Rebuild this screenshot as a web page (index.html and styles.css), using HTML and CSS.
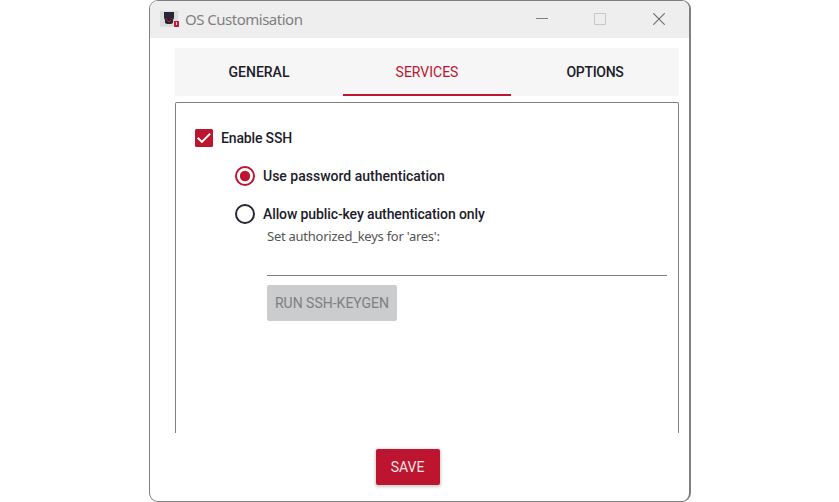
FILE: index.html
```html
<!DOCTYPE html>
<html lang="en">
<head>
<meta charset="utf-8">
<title>OS Customisation</title>
<link rel="stylesheet" href="styles.css">
</head>
<body>
<main class="window">
  <header class="titlebar">
    <svg class="app-icon" width="19" height="19" viewBox="0 0 19 19">
      <path fill="#dcdcdc" d="M0 1h18v16H0z"/>
      <path fill="#2b2434" d="M4 2h10v6l-1 2v3l-2 1H7l-2-1v-3L4 8z"/>
      <path fill="#c51a3a" d="M6 8h1v1H6zM11 8h1v1h-1zM7 10h1v1H7zM10 10h1v1h-1zM8 11h2v1H8zM14 11h5v6h-5z"/>
      <path fill="#f5e6dc" d="M16 12h1v3h-1z"/>
    </svg>
    <h1 class="title">OS Customisation</h1>
    <div class="controls">
      <svg width="12" height="12" viewBox="0 0 12 12"><path d="M0 5.5h12" stroke="#808080"/></svg>
      <svg width="12" height="12" viewBox="0 0 12 12"><path d="M.5.5h11v11H.5z" fill="none" stroke="#c8c8c8"/></svg>
      <svg class="close" width="12" height="12" viewBox="0 0 12 12"><path d="M.3.3l11.4 11.4M11.7.3L.3 11.7" stroke="#707070" stroke-width="1.2"/></svg>
    </div>
  </header>
  <nav class="tabs">
    <span class="tab">GENERAL</span>
    <span class="tab active">SERVICES</span>
    <span class="tab options">OPTIONS</span>
  </nav>
  <section class="panel">
    <div class="row">
      <svg class="check" width="18" height="18" viewBox="0 0 18 18"><rect width="18" height="18" rx="1.5" fill="#bd1530"/><path d="M2.7 8.7l4.2 4.2 8.3-8.3" fill="none" stroke="#fff" stroke-width="2"/></svg>
      <span class="label enable">Enable SSH</span>
    </div>
    <div class="row option">
      <svg width="20" height="20" viewBox="0 0 20 20"><circle cx="10" cy="10" r="9" fill="none" stroke="#bd1530" stroke-width="2"/><circle cx="10" cy="10" r="5.2" fill="#bd1530"/></svg>
      <span class="label">Use password authentication</span>
    </div>
    <div class="row option">
      <svg width="20" height="20" viewBox="0 0 20 20"><circle cx="10" cy="10" r="9" fill="none" stroke="#2b2434" stroke-width="2"/></svg>
      <span class="label key">Allow public-key authentication only</span>
    </div>
    <div class="keys">
      <span class="hint">Set authorized_keys for 'ares':</span>
      <div class="field"></div>
      <button class="keygen" disabled>RUN SSH-KEYGEN</button>
    </div>
  </section>
  <footer class="footer"><button class="save">SAVE</button></footer>
</main>
</body>
</html>
```
FILE: styles.css
```css
* { box-sizing: border-box; }
body { margin: 0; height: 502px; overflow: hidden; background: #fff; font-family: Roboto, sans-serif; font-size: 14px; color: #211c2b; }
button { font: inherit; border: 0; padding: 0; }
svg { display: block; flex: none; }
.window { width: 542px; height: 502px; margin-left: 149px; border: 1px solid #808080; border-right-width: 2px; border-radius: 9px; overflow: hidden; background: #fff; display: flex; flex-direction: column; }
.titlebar { height: 37px; flex: none; display: flex; align-items: center; background: #eeeeee; padding: 0 24px 2px 10px; }
.app-icon { margin-top: 2px; }
.title { margin: 0 0 0 6px; font: 400 15px/20px "Noto Sans", sans-serif; letter-spacing: -0.5px; color: #808080; white-space: nowrap; }
.controls { display: flex; gap: 46px; margin-left: auto; }
.close { margin-left: 1px; }
.tabs { display: flex; flex: none; height: 48px; width: 504px; margin: 10px 0 0 25px; background: #f6f6f6; font-weight: 500; }
.tab { flex: 1; display: flex; align-items: center; justify-content: center; border: solid transparent; border-width: 2px 0; }
.active { color: #bd1530; border-bottom-color: #bd1530; font-weight: 400; }
.options { letter-spacing: -0.3px; }
.panel { width: 504px; height: 331px; flex: none; margin: 6px 0 0 25px; border: 1px solid #808080; border-bottom: 0; border-radius: 2px 2px 0 0; padding: 16px 11px 0 19px; }
.row { height: 38px; display: flex; align-items: center; gap: 8px; white-space: nowrap; font-weight: 500; }
.option { padding-left: 40px; }
.enable { letter-spacing: -0.15px; }
.key { letter-spacing: -0.11px; }
.keys { padding-left: 72px; margin-top: -7px; display: flex; flex-direction: column; }
.hint { font: 13px/20px "Noto Sans", sans-serif; letter-spacing: -0.25px; color: #555; align-self: flex-start; white-space: nowrap; }
.field { height: 30px; border-bottom: 1px solid #808080; }
.keygen { margin-top: 9px; width: 130px; height: 36px; border-radius: 2px; background: #cacccd; color: #808080; }
.footer { display: flex; justify-content: center; padding: 16px 0 0; margin-right: 24px; }
.save { width: 64px; height: 36px; border-radius: 2px; background: #bd1530; color: #f3e3e0; box-shadow: 0 1px 3px 1px #ccc; }
```
